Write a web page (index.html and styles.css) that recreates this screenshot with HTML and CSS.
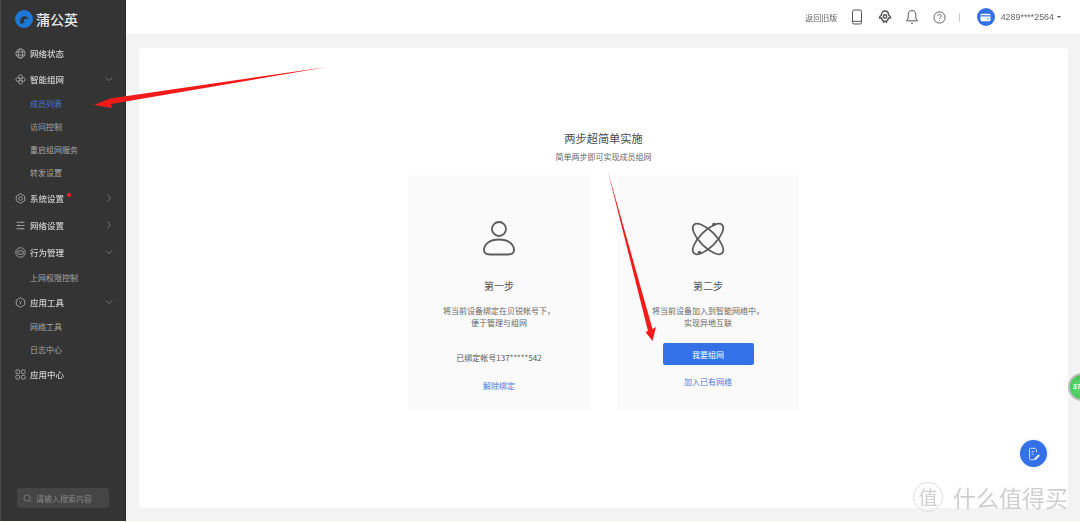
FILE: index.html
```html
<!DOCTYPE html>
<html lang="zh-CN">
<head>
<meta charset="utf-8">
<title>蒲公英</title>
<link rel="stylesheet" href="styles.css">
</head>
<body>
<div class="app">
  <aside class="sidebar">
    <div class="logo">
      <svg class="logo-mark" viewBox="0 0 18 18"><circle cx="9" cy="9" r="9" fill="#1d78d8"/><path d="M5.300 13.800C5 12.500 5.100 11.300 5.300 10c.4-2.400 2-3.800 4.200-3.800 2.300 0 4 1.500 4 3.500-.8-.8-1.800-1.200-2.800-1-1.300.2-2 1.100-2 2.100 0 .9.600 1.500 1.300 1.800-1.500.9-3.300 1-4.700 1.200z" fill="#333"/></svg>
      <span class="logo-text">蒲公英</span>
    </div>
    <nav class="nav">
      <div class="item">
        <svg class="ico" viewBox="0 0 12 12"><circle cx="6" cy="6" r="5"/><ellipse cx="6" cy="6" rx="2.300" ry="5"/><path d="M1 4.300h10M1 7.700h10"/></svg>
        <span>网络状态</span>
      </div>
      <div class="item">
        <svg class="ico" viewBox="0 0 12 12"><rect x="4" y="1" width="4" height="4" rx="1.800"/><rect x="4" y="7" width="4" height="4" rx="1.800"/><rect x="1" y="4" width="4" height="4" rx="1.800"/><rect x="7" y="4" width="4" height="4" rx="1.800"/></svg>
        <span>智能组网</span>
        <svg class="chev" viewBox="0 0 8 8"><path d="M.5 2.500 4 5.500l3.500-3"/></svg>
      </div>
      <div class="sub active">成员列表</div>
      <div class="sub">访问控制</div>
      <div class="sub">重启组网服务</div>
      <div class="sub">转发设置</div>
      <div class="item gap">
        <svg class="ico" viewBox="0 0 12 12"><path d="M6 .8 10.600 3.400v5.200L6 11.200 1.400 8.600V3.400z"/><circle cx="6" cy="6" r="2"/></svg>
        <span class="dotted">系统设置</span>
        <svg class="chev" viewBox="0 0 8 8"><path d="M2.500.5 5.500 4l-3 3.500"/></svg>
      </div>
      <div class="item gap">
        <svg class="ico" viewBox="0 0 12 12"><path d="M1.500 2.500h9M1.500 6h9M1.500 9.500h9M7.500 1.500v2M4 5v2M7.500 8.500v2"/></svg>
        <span>网络设置</span>
        <svg class="chev" viewBox="0 0 8 8"><path d="M2.500.5 5.500 4l-3 3.500"/></svg>
      </div>
      <div class="item gap">
        <svg class="ico" viewBox="0 0 12 12"><circle cx="6" cy="6" r="5.200"/><rect x="2.600" y="4.200" width="6.800" height="3.600" rx="1.800"/><path d="M4.800 6h.4M6.800 6h.4"/></svg>
        <span>行为管理</span>
        <svg class="chev" viewBox="0 0 8 8"><path d="M.5 2.500 4 5.500l3.500-3"/></svg>
      </div>
      <div class="sub gap">上网权限控制</div>
      <div class="item">
        <svg class="ico" viewBox="0 0 12 12"><path d="M6 .8 10.600 3.400v5.200L6 11.200 1.400 8.600V3.400z"/><path d="M4.500 4.500 6 6l1.500-1.500M6 6v2"/></svg>
        <span>应用工具</span>
        <svg class="chev" viewBox="0 0 8 8"><path d="M.5 2.500 4 5.500l3.500-3"/></svg>
      </div>
      <div class="sub">网络工具</div>
      <div class="sub">日志中心</div>
      <div class="item">
        <svg class="ico" viewBox="0 0 12 12"><rect x="1" y="1" width="4" height="4" rx="1"/><rect x="7" y="1" width="4" height="4" rx="1"/><rect x="1" y="7" width="4" height="4" rx="1"/><rect x="7" y="7" width="4" height="4" rx="1"/></svg>
        <span>应用中心</span>
      </div>
    </nav>
    <div class="search">
      <svg class="search-ico" viewBox="0 0 10 10"><circle cx="4.500" cy="4.500" r="3.500"/><path d="m7 7 2.300 2.300"/></svg>
      <span>请输入搜索内容</span>
    </div>
  </aside>

  <div class="column">
    <header class="topbar">
      <span class="old">返回旧版</span>
      <svg class="top-ico" viewBox="0 0 14 16"><rect x="2.500" y="1" width="9" height="14" rx="1.500"/><path d="M2.500 12.300h9"/></svg>
      <svg class="top-ico bird" viewBox="0 0 14 16"><path d="M7 2c2.300 0 3.500 1.700 3.500 3.800 1.500.9 2 2.200 2 3.200-.6.200-1.200.200-1.900 0C10 11 8.700 12.500 7 12.500S4 11 3.400 9C2.700 9.200 2.100 9.200 1.500 9c0-1 .5-2.300 2-3.200C3.500 3.700 4.700 2 7 2z"/><circle cx="7" cy="7.500" r="1.700"/><path d="M5.500 13v1M8.500 13v1"/></svg>
      <svg class="top-ico" viewBox="0 0 14 16"><path d="M7 1.500c2.500 0 3.800 2 3.800 4.200v3.500l1.700 2.600h-11l1.700-2.600V5.700C3.200 3.500 4.500 1.500 7 1.500zM5.700 13.700c.4 1 2.200 1 2.600 0"/></svg>
      <svg class="top-ico help" viewBox="0 0 14 14"><circle cx="7" cy="7" r="6"/><path d="M5.200 5.500c0-2.300 3.700-2.300 3.700 0 0 1.500-1.900 1.500-1.900 3"/><path d="M7 10v.6"/></svg>
      <span class="divider"></span>
      <span class="avatar">
        <svg viewBox="0 0 12 10"><rect x=".5" y=".8" width="11" height="8.400" rx="1.500" fill="#fff"/><rect x="0.500" y="2.500" width="11" height="1.300" fill="#3471e8"/><rect x="8" y="6" width="2" height="1" fill="#3471e8"/></svg>
      </span>
      <span class="account">4289****2564</span>
      <span class="caret"></span>
    </header>

    <main class="main">
      <section class="panel">
        <h1 class="title">两步超简单实施</h1>
        <p class="subtitle">简单两步即可实现成员组网</p>
        <div class="steps">
          <article class="step">
            <svg class="step-ico" viewBox="0 0 36 36"><circle cx="18" cy="8" r="7"/><path d="M9 33.500h18c3.500 0 6-1.500 6-4.500C33 23 27 18.500 18 18.500S3 23 3 29c0 3 2.500 4.500 6 4.500z"/></svg>
            <h2 class="step-title">第一步</h2>
            <p class="step-desc">将当前设备绑定在贝锐帐号下，<br>便于管理与组网</p>
            <p class="bound">已绑定帐号137*****542</p>
            <a class="link unbind">解除绑定</a>
          </article>
          <article class="step">
            <svg class="step-ico" viewBox="0 0 36 36"><ellipse cx="18" cy="18" rx="20" ry="8" transform="rotate(45 18 18)"/><ellipse cx="18" cy="18" rx="20" ry="8" transform="rotate(-45 18 18)"/><circle class="fill" cx="24" cy="3.500" r="1.800"/><circle class="fill" cx="9.500" cy="31.500" r="1.800"/></svg>
            <h2 class="step-title">第二步</h2>
            <p class="step-desc">将当前设备加入到智能网络中，<br>实现异地互联</p>
            <button class="btn">我要组网</button>
            <a class="link join">加入已有网络</a>
          </article>
        </div>
        <div class="fab">
          <svg viewBox="0 0 14 14"><path d="M9.500 5V2.800L8 1.300H3.500c-.6 0-1 .4-1 1v9.400c0 .6.400 1 1 1h4M4.700 4.800h2.600M4.700 7.300h1.800"/><path d="m7.800 11.500 3.700-3.700 1 1-3.700 3.700H7.800z" fill="#fff"/></svg>
        </div>
      </section>
    </main>
  </div>
</div>
<div class="bottom-line"></div>

<div class="float-badge"><span>37</span></div>

<div class="watermark">
  <span class="wm-seal">值</span>
  <span class="wm-text">什么值得买</span>
</div>

<svg class="arrows" viewBox="0 0 1080 522">
  <path d="M327 67 110 98.500 94 105 112 108 111 104z" fill="#f41a1a"/>
  <path d="M607.500 170 648 331 645.500 332 652.500 341 656 327 652.500 329z" fill="#f41a1a"/>
</svg>
</body>
</html>
```
FILE: styles.css
```css
* { box-sizing: border-box; }
html, body { margin: 0; padding: 0; height: 522px; overflow: hidden; background: #fdfdf8; }
body {
  font-family: "Noto Sans CJK SC", "Noto Sans", sans-serif;
  color: #555;
  position: relative;
}
h1, h2, p { margin: 0; font-weight: 400; }

.app { display: flex; height: 521px; filter: blur(.3px); }

/* sidebar */
.sidebar {
  width: 126px;
  flex: none;
  background: #343434;
  border-left: 1px solid #4a4a4a;
  border-right: 1px solid #2a2a2a;
  display: flex;
  flex-direction: column;
  padding-bottom: 13px;
}
.logo { height: 40px; display: flex; align-items: center; padding: 0 0 2px 14px; gap: 3px; }
.logo-mark { width: 18px; height: 18px; }
.logo-text { font-size: 14px; font-weight: 500; color: #e8e8e8; line-height: 1; }

.nav { display: flex; flex-direction: column; }
.item {
  height: 26px;
  display: flex;
  align-items: center;
  padding-left: 14px;
  font-size: 8.500px;
  font-weight: 500;
  color: #d0d0d0;
  position: relative;
}
.item span { margin-left: 4px; }
.ico { width: 11px; height: 11px; fill: none; stroke: #b0b0b0; stroke-width: .9; flex: none; }
.chev {
  position: absolute;
  left: 104px;
  top: 9px;
  width: 8px;
  height: 8px;
  fill: none;
  stroke: #8a8a8a;
  stroke-width: .7;
}
.sub { height: 23px; line-height: 23px; padding-left: 29px; font-size: 8px; color: #a8a8a8; }
.sub.active { color: #4a78d8; }
.gap { margin-top: 1px; }
.dotted { position: relative; }
.dotted::after {
  content: "";
  position: absolute;
  right: -7px;
  top: 1px;
  width: 4px;
  height: 4px;
  border-radius: 50%;
  background: #f01c24;
}

.search {
  margin: auto 0 0 16px;
  width: 92px;
  height: 20px;
  border-radius: 3px;
  background: #454545;
  display: flex;
  align-items: center;
  padding-left: 6px;
  gap: 4px;
  font-size: 8px;
  color: #8a8a8a;
}
.search-ico { width: 9px; height: 9px; fill: none; stroke: #8a8a8a; stroke-width: .8; }

/* right column */
.column { flex: 1; display: flex; flex-direction: column; min-width: 0; }
.topbar {
  height: 34px;
  flex: none;
  background: #fff;
  display: flex;
  align-items: center;
  justify-content: flex-end;
  padding-right: 19px;
}
.old { font-size: 8px; color: #666; margin-right: 13px; }
.top-ico { width: 14px; height: 16px; fill: none; stroke: #555; stroke-width: 1; margin-right: 13.500px; }
.top-ico.bird { stroke-width: 1.400; }
.top-ico.help { width: 13px; height: 13px; margin-right: 13px; }
.divider { width: 1px; height: 9px; background: #ccc; margin-right: 17px; }
.avatar {
  width: 18px;
  height: 18px;
  border-radius: 50%;
  background: #3471e8;
  display: flex;
  align-items: center;
  justify-content: center;
  margin-right: 6px;
}
.avatar svg { width: 11px; height: 9px; }
.account { font-size: 8.900px; color: #666; margin-right: 3px; font-family: "Liberation Sans", sans-serif; }
.caret {
  width: 0;
  height: 0;
  border: 2.500px solid transparent;
  border-top-color: #555;
  border-bottom: 0;
}

.main { flex: 1; background: #f3f3f3; padding: 14px 12px 13px 13px; min-height: 0; }
.panel {
  height: 100%;
  background: #fff;
  border-radius: 4px;
  padding-top: 82px;
  display: flex;
  flex-direction: column;
  align-items: center;
  position: relative;
}
.title { font-size: 11.200px; line-height: 16px; color: #4a4a4a; }
.subtitle { font-size: 8px; line-height: 12px; margin-top: 5px; color: #666; }
.steps { display: flex; gap: 27px; margin-top: 12px; }
.step {
  width: 182px;
  height: 235px;
  background: #fafafa;
  display: flex;
  flex-direction: column;
  align-items: center;
  padding-top: 46px;
  text-align: center;
}
.step-ico { width: 36px; height: 36px; fill: none; stroke: #5c5c5c; stroke-width: 1.800; overflow: visible; flex: none; }
.step-ico .fill { fill: #5c5c5c; stroke: none; }
.step-title { font-size: 10px; line-height: 14px; margin-top: 22px; color: #555; }
.step-desc { font-size: 8px; line-height: 12px; margin-top: 12px; color: #666; }
.bound { font-size: 8px; line-height: 12px; margin-top: 23px; color: #555; }
.link { font-size: 8px; line-height: 12px; color: #4a78e0; }
.unbind { margin-top: 16px; }
.join { margin-top: 11px; }
.btn {
  width: 91px;
  height: 22px;
  margin-top: 14px;
  border: 0;
  border-radius: 2px;
  background: #3471e8;
  color: #fff;
  font: inherit;
  font-size: 8px;
  padding: 0;
}
.fab {
  position: absolute;
  left: 881px;
  top: 392px;
  width: 27px;
  height: 27px;
  border-radius: 50%;
  background: #3471e8;
  box-shadow: 0 0 3px rgba(52,113,232,.25);
  display: flex;
  align-items: center;
  justify-content: center;
}
.fab svg { width: 14px; height: 14px; fill: none; stroke: #e4ecfd; stroke-width: .9; }

.bottom-line { height: 1px; background: #fdfdf8; }

.float-badge {
  position: absolute;
  left: 1068px;
  top: 373px;
  width: 28px;
  height: 28px;
  border-radius: 50%;
  background: radial-gradient(circle at 40% 55%, #5fdc70, #33b84e);
  border: 2px solid #bdbdbd;
  font: 700 7px/24px "Liberation Sans", sans-serif;
  color: #fff;
  padding-left: 3px;
}

.watermark {
  position: absolute;
  left: 913px;
  top: 481px;
  width: 160px;
  height: 31px;
  display: flex;
  align-items: center;
  color: #cfcfcf;
}
.wm-seal {
  width: 30px;
  height: 30px;
  border: 1px solid #dcdcdc;
  border-radius: 50%;
  font-size: 19px;
  line-height: 27px;
  text-align: center;
  flex: none;
}
.wm-text { font-size: 23px; line-height: 30px; margin-left: 10px; white-space: nowrap; }

.arrows { position: absolute; left: 0; top: 0; width: 1080px; height: 522px; pointer-events: none; }
```
